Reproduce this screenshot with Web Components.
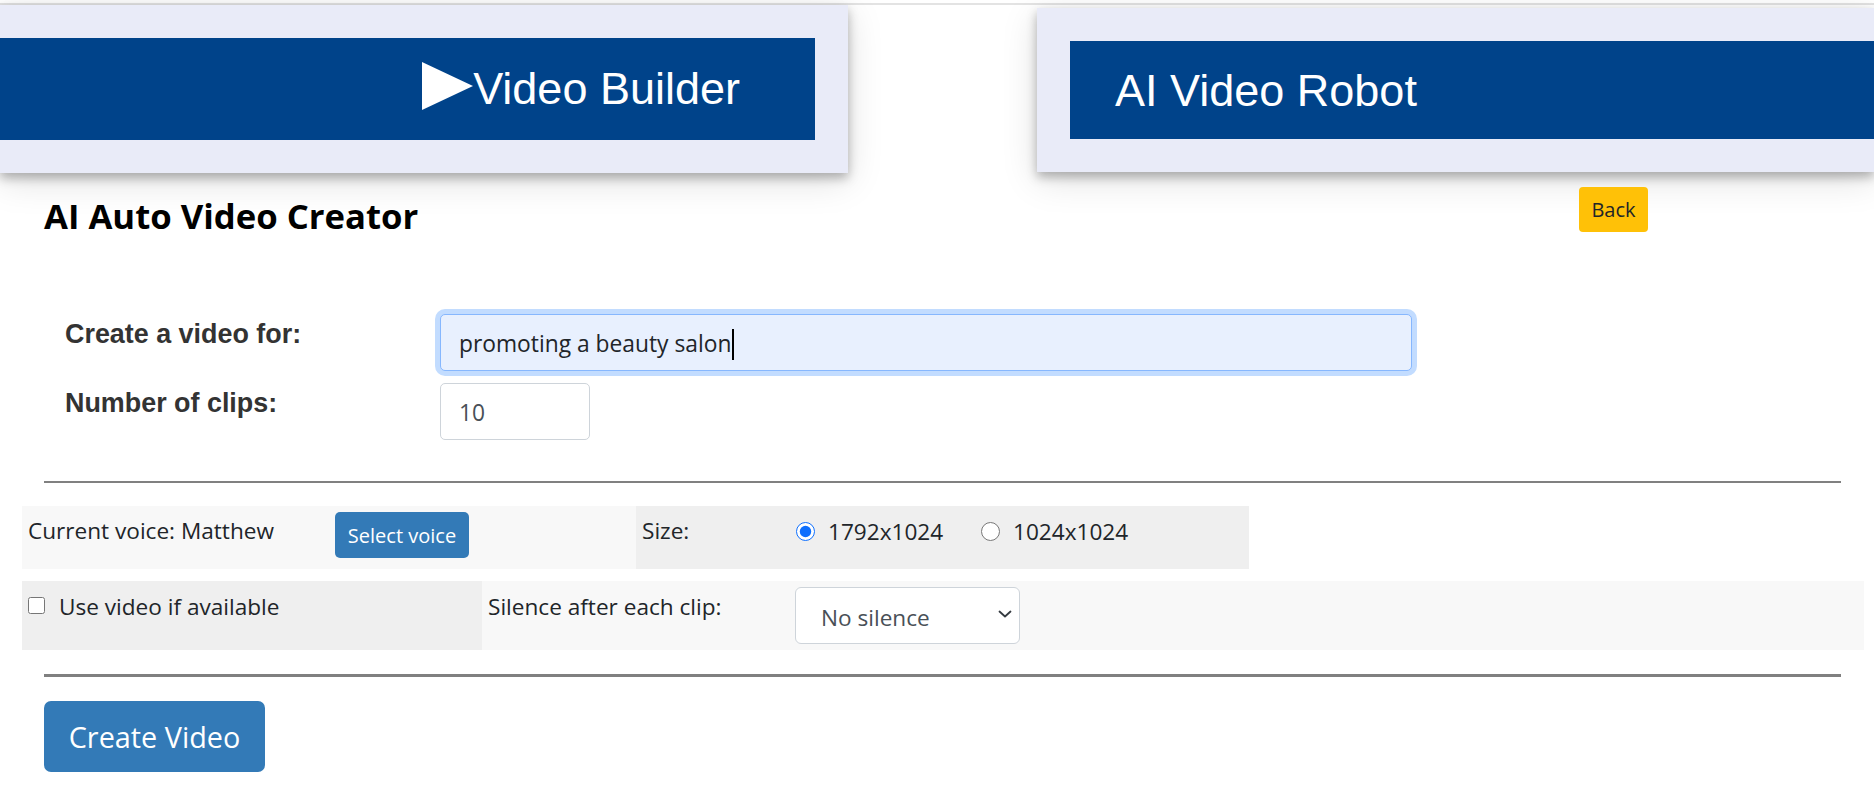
<!DOCTYPE html>
<html>
<head>
<meta charset="utf-8">
<title>AI Auto Video Creator</title>
<style>
  html, body { margin: 0; background: #fff; }
  body { font-family: "Open Sans", "Liberation Sans", sans-serif; color: #212529; overflow: hidden; }
  .top { display: flex; justify-content: space-between; align-items: flex-start; margin-top: 3px; border-top: 2px solid #e3e3e3; height: 168px; }
  .body { padding-top: 14px; }
  .fields { display: grid; gap: 12px; margin-top: 77px; padding-left: 65px; }
  .bands { display: grid; gap: 12px; margin: 23px 10px 0 22px; }
  .rule { height: 2px; background: #808080; margin: 41px 33px 0 44px; }
  .rule.thick { height: 3px; margin-top: 24px; }
  .create { display: flex; margin: 24px 0 0 44px; }
</style>
</head>
<body>
<template id="title-card-tpl">
  <style>
    :host { display: block; box-sizing: border-box; background: #e9ebf8; padding: 33px 33px 33px 0; box-shadow: 0 5px 10px rgba(0,0,0,.28), 0 8px 34px rgba(0,0,0,.13); }
    :host([side=right]) { padding: 33px 0 33px 33px; margin-top: 3px; }
    .bar { display: flex; align-items: center; justify-content: flex-end; box-sizing: border-box; height: 102px; padding-right: 75px; background: #00438a; color: #fff; font: 45px/1 "Liberation Sans", Arial, sans-serif; }
    :host([side=right]) .bar { height: 98px; justify-content: flex-start; padding: 0 0 0 45px; }
    .text { margin-top: -1px; }
    :host([side=right]) .text { margin-top: 0; }
  </style>
  <div class="bar"><slot name="icon"></slot><span class="text"><slot></slot></span></div>
</template>

<template id="page-heading-tpl">
  <style>
    :host { display: grid; grid-template-columns: 1535px auto; padding-left: 44px; align-items: start; }
    h1 { margin: 8px 0 0; font: 700 34.7px/42px "Open Sans", sans-serif; color: #000; white-space: nowrap; }
  </style>
  <h1><slot></slot></h1>
  <slot name="action"></slot>
</template>

<template id="action-button-tpl">
  <style>
    :host { display: inline-flex; align-items: center; justify-content: center; box-sizing: border-box; width: 134px; height: 46px; padding-top: 1px; background: #337ab7; color: #fff; border-radius: 5px; font: 20px/1 "Open Sans", sans-serif; }
    :host([kind=back]) { width: 69px; height: 45px; padding-top: 0; background: #ffc107; color: #212529; border-radius: 4px; }
    :host([size=lg]) { width: 221px; height: 71px; border-radius: 7px; font-size: 28.8px; }
  </style>
  <slot></slot>
</template>

<template id="field-row-tpl">
  <style>
    :host { display: grid; grid-template-columns: 375px 1fr; }
    label { font: 700 26.9px/30px "Liberation Sans", Arial, sans-serif; color: #333; padding-top: 5px; white-space: nowrap; }
  </style>
  <label><slot name="label"></slot></label>
  <div><slot></slot></div>
</template>

<template id="text-box-tpl">
  <style>
    :host { display: flex; align-items: center; box-sizing: border-box; height: 57px; padding: 3px 18px 0; background: #fff; border: 1px solid #ced4da; border-radius: 5px; font: 22.8px/1.2 "Open Sans", sans-serif; color: #495057; }
    :host([focused]) { width: 972px; background: #e8f0fe; border-color: #86b7fe; box-shadow: 0 0 0 5px #c2dcff; color: #212529; }
    :host([narrow]) { width: 150px; }
    i { display: none; width: 2px; height: 31px; margin-left: 1px; background: #000; }
    :host([focused]) i { display: block; }
  </style>
  <slot></slot><i></i>
</template>

<template id="option-band-tpl">
  <style>
    :host { display: grid; height: 63px; }
    :host([layout=first]) { grid-template-columns: 614px 613px; width: 1227px; }
    :host([layout=second]) { grid-template-columns: 460px 1fr; height: 69px; }
  </style>
  <slot></slot>
</template>

<template id="band-cell-tpl">
  <style>
    :host { display: flex; align-items: flex-start; box-sizing: border-box; padding-left: 6px; background: #f8f8f8; font: 22.6px/28px "Open Sans", sans-serif; color: #212529; }
    :host([shade]) { background: #efefef; }
    ::slotted(action-button) { margin-top: 6px; }
    ::slotted(select-box) { margin-top: 6px; }
    ::slotted(span) { padding-top: 11px; white-space: nowrap; }
    ::slotted(radio-option) { padding-top: 11px; }
    :host([tall]) ::slotted(span) { padding-top: 12px; }
    :host([tall]) ::slotted(radio-option) { padding-top: 12px; }
  </style>
  <slot></slot>
</template>

<template id="radio-option-tpl">
  <style>
    :host { display: inline-flex; align-items: flex-start; gap: 13px; white-space: nowrap; }
    input { width: 19px; height: 19px; margin: 5px 0 0; accent-color: #0d6efd; }
    span { position: relative; top: 1px; }
    :host([kind=check]) { gap: 14px; }
    :host([kind=check]) input { width: 17px; height: 17px; margin: 4px 0 0; }
    :host([kind=check]) span { top: 0; }
  </style>
  <input><span><slot></slot></span>
</template>

<template id="select-box-tpl">
  <style>
    :host { display: flex; align-items: center; justify-content: space-between; box-sizing: border-box; width: 225px; height: 57px; padding: 5px 7px 0 25px; background: #fff; border: 1px solid #ced4da; border-radius: 6px; font: 22.6px/1.2 "Open Sans", sans-serif; color: #495057; }
    svg { width: 14px; height: 8px; margin-top: -9px; }
  </style>
  <slot></slot>
  <svg viewBox="0 0 14 8" fill="none" stroke="#343a40" stroke-width="1.8" stroke-linecap="round" stroke-linejoin="round"><path d="M1.5 1.5 7 6.5l5.5-5"/></svg>
</template>

<script>
  // every element just clones its template into an open shadow root
  class TemplatedElement extends HTMLElement {
    constructor() {
      super();
      const tpl = document.getElementById(this.constructor.tpl);
      this.attachShadow({ mode: 'open' }).appendChild(tpl.content.cloneNode(true));
    }
  }

  class RadioOption extends TemplatedElement {
    static tpl = 'radio-option-tpl';
    connectedCallback() {
      const input = this.shadowRoot.querySelector('input');
      input.type = this.getAttribute('kind') === 'check' ? 'checkbox' : 'radio';
      input.checked = this.hasAttribute('checked');
    }
  }

  const simple = ['title-card', 'page-heading', 'action-button', 'field-row', 'text-box', 'option-band', 'band-cell', 'select-box'];
  simple.forEach((name) => {
    customElements.define(name, class extends TemplatedElement {
      static tpl = `${name}-tpl`;
    });
  });
  customElements.define('radio-option', RadioOption);
</script>

<div class="top">
  <title-card style="width:848px">
    <svg slot="icon" style="display:block;width:51px;height:48px;margin-top:-6px" viewBox="0 0 51 48"><path d="M0 0 51 24 0 48z" fill="#fff"/></svg>
    Video Builder
  </title-card>
  <title-card side="right" style="width:837px">AI Video Robot</title-card>
</div>

<div class="body">
  <page-heading>
    AI Auto Video Creator
    <action-button slot="action" kind="back">Back</action-button>
  </page-heading>

  <div class="fields">
    <field-row>
      <span slot="label">Create a video for:</span>
      <text-box focused>promoting a beauty salon</text-box>
    </field-row>
    <field-row>
      <span slot="label">Number of clips:</span>
      <text-box narrow>10</text-box>
    </field-row>
  </div>

  <div class="rule"></div>

  <div class="bands">
    <option-band layout="first">
      <band-cell>
        <span style="width:307px">Current voice: Matthew</span>
        <action-button>Select voice</action-button>
      </band-cell>
      <band-cell shade>
        <span style="width:154px">Size:</span>
        <radio-option checked style="width:185px">1792x1024</radio-option>
        <radio-option>1024x1024</radio-option>
      </band-cell>
    </option-band>
    <option-band layout="second">
      <band-cell shade tall>
        <radio-option kind="check">Use video if available</radio-option>
      </band-cell>
      <band-cell tall>
        <span style="width:307px">Silence after each clip:</span>
        <select-box>No silence</select-box>
      </band-cell>
    </option-band>
  </div>

  <div class="rule thick"></div>

  <action-button class="create" size="lg">Create Video</action-button>
</div>
</body>
</html>
